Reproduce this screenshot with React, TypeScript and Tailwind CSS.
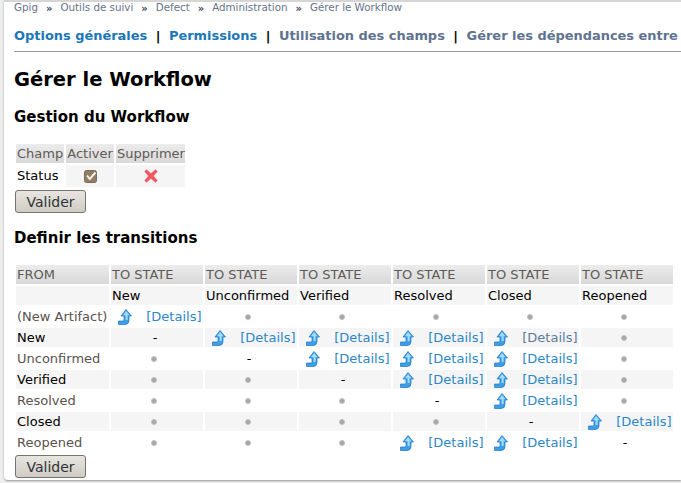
import React from "react";

const STATES = ["New", "Unconfirmed", "Verified", "Resolved", "Closed", "Reopened"];

// y = transition link, g = greyed link, d = dot, - = same state
const ROWS: { from: string; bold?: boolean; cells: string[] }[] = [
  { from: "(New Artifact)", cells: ["y", "d", "d", "d", "d", "d"] },
  { from: "New", bold: true, cells: ["-", "y", "y", "y", "g", "d"] },
  { from: "Unconfirmed", cells: ["d", "-", "y", "y", "y", "d"] },
  { from: "Verified", bold: true, cells: ["d", "d", "-", "y", "y", "d"] },
  { from: "Resolved", cells: ["d", "d", "d", "-", "y", "d"] },
  { from: "Closed", bold: true, cells: ["d", "d", "d", "d", "-", "y"] },
  { from: "Reopened", cells: ["d", "d", "d", "y", "y", "-"] },
];

const ArrowIcon = () => (
  <svg width="14" height="16" viewBox="0 0 14 16" className="block">
    <path
      d="M8 0.5 L13.5 7 L11 7 L11 11.5 Q11 15.5 7 15.5 L0.5 15.5 L0.5 12 L5 12 Q6 12 6 11 L6 7 L3 7 Z"
      fill="#3d9fe8"
      stroke="#1b74c4"
      strokeWidth="0.7"
    />
    <path d="M8 2 L11.5 6.2 L9.6 6.2 L9.6 11 L7.6 11 L7.6 6.2 L5 6.2 Z" fill="#a5dcf8" />
  </svg>
);

const Dot = () => <span className="inline-block w-[6px] h-[6px] rounded-full bg-[#a6a6a6] border border-[#c0c0c0]" />;

const CheckIcon = () => (
  <svg width="13" height="13" viewBox="0 0 13 13" className="block">
    <rect x="0.5" y="0.5" width="12" height="12" rx="2" fill="#927c63" stroke="#7d6a55" />
    <path d="M3 5.5 L5.8 9 L11.5 2.5" fill="none" stroke="#f4f1ec" strokeWidth="2" />
  </svg>
);

const CrossIcon = () => (
  <svg width="14" height="14" viewBox="0 0 14 14" className="block">
    <path
      d="M2.5 0.5 L7 4.5 L11.5 0.5 L13.5 2.5 L9.5 7 L13.5 11.5 L11.5 13.5 L7 9.5 L2.5 13.5 L0.5 11.5 L4.5 7 L0.5 2.5 Z"
      fill="#f4525e"
      stroke="#f58a90"
      strokeWidth="0.5"
    />
  </svg>
);

const ValiderButton = () => (
  <button className="block w-[71px] h-[23px] rounded-[3px] border border-[#77736d] bg-gradient-to-b from-[#e8e5e0] to-[#d0ccc5] text-[14px] leading-none text-[#2e3436]">
    Valider
  </button>
);

const Cell = ({ kind }: { kind: string }) => {
  if (kind === "d") {
    return (
      <div className="flex justify-center pr-[6px] h-[19px] items-center">
        <Dot />
      </div>
    );
  }
  if (kind === "-") return <div className="text-center text-black pr-[4px] leading-[19px]">-</div>;
  return (
    <div className="flex items-center justify-between pl-[7px] pr-[1.5px] h-[19px]">
      <ArrowIcon />
      <span className={kind === "g" ? "text-[#5d7a9c]" : "text-[#2b87c9]"}>[Details]</span>
    </div>
  );
};

const Sep = () => <span className="text-[#3c4656] font-bold text-[10px]">»</span>;
const Pipe = () => <span className="text-black font-bold">|</span>;

export default function App() {
  return (
    <div
      className="w-[681px] h-[483px] overflow-hidden bg-[#eeeeee] pl-[4px]"
      style={{ fontFamily: '"DejaVu Sans", sans-serif' }}
    >
      <div className="h-[480px] bg-white border-t-2 border-[#d6d6d6] rounded-bl-[4px] pl-[10px] shadow-[0_1px_2px_#999] overflow-hidden">
        <div className="flex items-center h-[12px] whitespace-nowrap text-[10.3px] text-[#67738a] gap-[8px]">
          <span>Gpig</span>
          <Sep />
          <span>Outils de suivi</span>
          <Sep />
          <span>Defect</span>
          <Sep />
          <span>Administration</span>
          <Sep />
          <span>Gérer le Workflow</span>
        </div>

        <div className="flex items-center h-[20px] mt-[12px] whitespace-nowrap text-[12.95px] font-bold gap-[8.5px]">
          <span className="text-[#1a77b8]">Options générales</span>
          <Pipe />
          <span className="text-[#1a77b8]">Permissions</span>
          <Pipe />
          <span className="text-[#5f7390]">Utilisation des champs</span>
          <Pipe />
          <span className="text-[#5f7390]">Gérer les dépendances entre</span>
        </div>
        <div className="h-[1px] bg-[#999999] mt-[5px] -mr-[10px]" />

        <h1 className="mt-[16px] text-[19.5px] leading-[24px] font-bold text-black">Gérer le Workflow</h1>
        <h2 className="mt-[15px] text-[15px] leading-[20px] font-bold text-black">Gestion du Workflow</h2>

        <table className="mt-[15px] border-separate border-spacing-[2px] text-[13px] table-fixed w-[173px]">
          <colgroup>
            <col className="w-[48px]" />
            <col className="w-[48px]" />
            <col className="w-[69px]" />
          </colgroup>
          <thead>
            <tr className="h-[19px]">
              {["Champ", "Activer", "Supprimer"].map((h) => (
                <th
                  key={h}
                  className="px-[1px] p-0 font-normal text-center text-[#5f5a55] bg-gradient-to-b from-[#ececec] to-[#d8d8d8] leading-none"
                >
                  {h}
                </th>
              ))}
            </tr>
          </thead>
          <tbody>
            <tr className="h-[22px]">
              <td className="p-0 pl-[1px] text-black">Status</td>
              <td className="p-0 bg-[#f5f5f5]">
                <div className="flex justify-center">
                  <CheckIcon />
                </div>
              </td>
              <td className="p-0 bg-[#f5f5f5]">
                <div className="flex justify-center">
                  <CrossIcon />
                </div>
              </td>
            </tr>
          </tbody>
        </table>
        <div className="ml-[1px] mt-[1px]">
          <ValiderButton />
        </div>

        <h2 className="mt-[15px] text-[15px] leading-[20px] font-bold text-black">Definir les transitions</h2>

        <table className="mt-[15px] border-separate border-spacing-[2px] text-[13px] leading-[19px] table-fixed w-[661px]">
          <colgroup>
            <col className="w-[93px]" />
            {STATES.map((s) => (
              <col key={s} className="w-[92px]" />
            ))}
          </colgroup>
          <thead>
            <tr className="h-[19px]">
              <th className="p-0 pl-[1px] font-normal text-left text-[#5f5a55] bg-gradient-to-b from-[#ececec] to-[#d8d8d8]">
                FROM
              </th>
              {STATES.map((s) => (
                <th
                  key={s}
                  className="p-0 pl-[1px] font-normal text-left text-[#5f5a55] bg-gradient-to-b from-[#ececec] to-[#d8d8d8]"
                >
                  TO STATE
                </th>
              ))}
            </tr>
            <tr className="h-[19px]">
              <td className="p-0 bg-[#f5f5f5]" />
              {STATES.map((s) => (
                <td key={s} className="p-0 pl-[1px] bg-[#f5f5f5] text-black">
                  {s}
                </td>
              ))}
            </tr>
          </thead>
          <tbody>
            {ROWS.map((row, i) => (
              <tr key={row.from} className="h-[19px]">
                <td className={`p-0 pl-[1px] ${row.bold ? "bg-[#f5f5f5] text-black" : "text-[#5a524c]"}`}>{row.from}</td>
                {row.cells.map((c, j) => (
                  <td key={j} className={`p-0 ${i % 2 === 1 ? "bg-[#f5f5f5]" : ""}`}>
                    <Cell kind={c} />
                  </td>
                ))}
              </tr>
            ))}
          </tbody>
        </table>
        <div className="ml-[1px] mt-[1px]">
          <ValiderButton />
        </div>
      </div>
    </div>
  );
}
